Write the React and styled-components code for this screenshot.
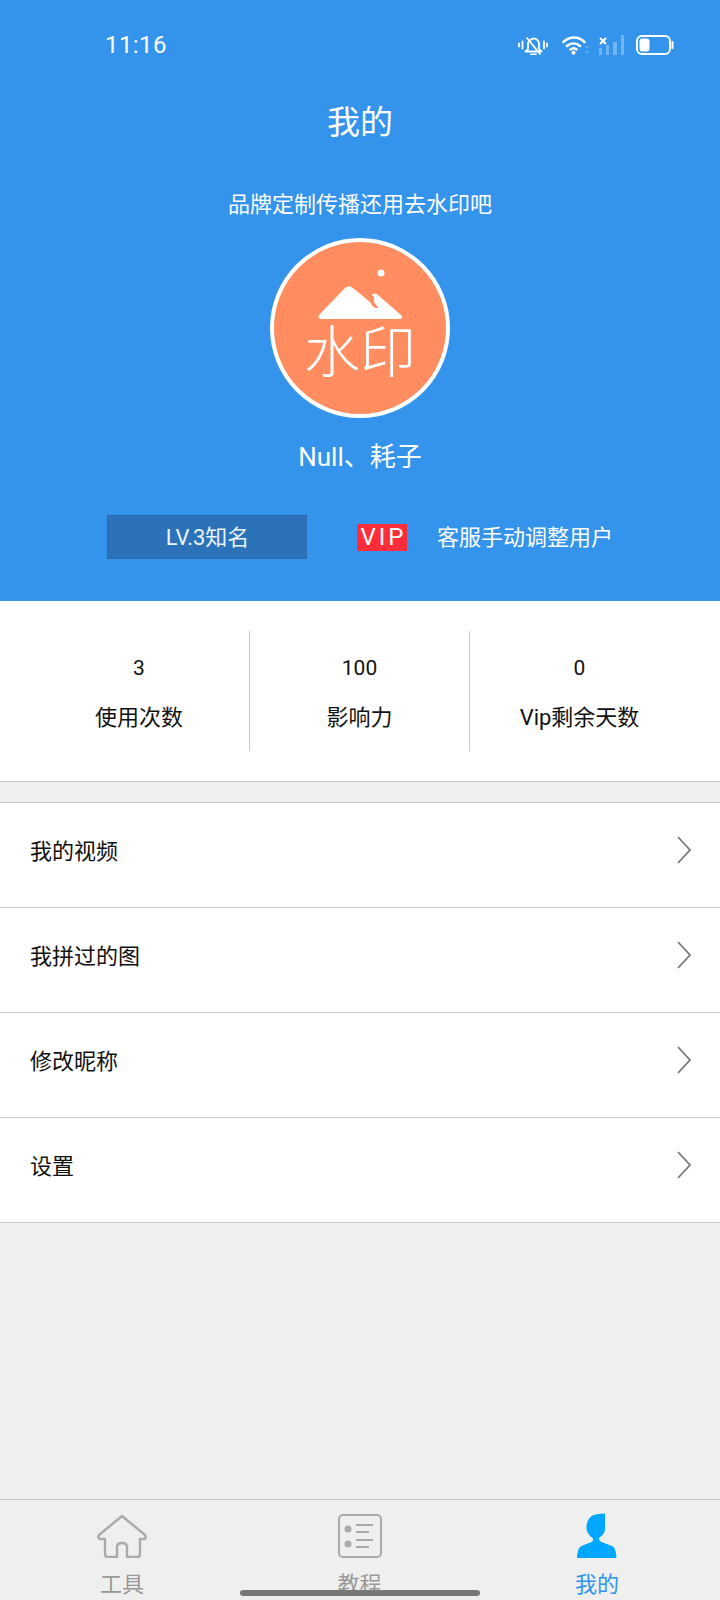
import React from 'react';
import styled, { createGlobalStyle } from 'styled-components';

const GlobalStyle = createGlobalStyle`
    html, body {
        margin: 0;
        padding: 0;
        background: #efefef;
    }
    body {
        font-family: Roboto, "Noto Sans CJK SC", sans-serif;
    }
`;

const Page = styled.div`
    position: relative;
    width: 720px;
    height: 1600px;
    display: flex;
    flex-direction: column;
    overflow: hidden;
    background: #efefef;
`;

const Header = styled.header`
    height: 601px;
    box-sizing: border-box;
    background: #3494ec;
    color: #fff;
    display: flex;
    flex-direction: column;
    align-items: center;
`;

const StatusBar = styled.div`
    align-self: stretch;
    height: 92px;
    box-sizing: border-box;
    padding: 30px 46px 0 105px;
    display: flex;
    align-items: flex-start;
    justify-content: space-between;
`;

const Clock = styled.span`
    font-size: 24px;
    line-height: 30px;
    letter-spacing: 0.4px;
`;

const StatusIcons = styled.div`
    display: flex;
    align-items: center;
    gap: 8px;
    height: 30px;
`;

const Title = styled.h1`
    margin: 0;
    height: 62px;
    font-size: 33px;
    font-weight: 400;
    line-height: 62px;
`;

const Slogan = styled.p`
    margin: 34px 0 0;
    height: 34px;
    font-size: 22px;
    line-height: 34px;
`;

const Avatar = styled.div`
    margin-top: 16px;
    width: 180px;
    height: 180px;
    box-sizing: border-box;
    border: 4px solid #fff;
    border-radius: 50%;
    background: #ff8d60;
    display: flex;
    flex-direction: column;
    align-items: center;
`;

const LogoMark = styled.svg`
    margin-top: 26px;
    display: block;
    flex: none;
`;

const LogoText = styled.span`
    margin-top: 3px;
    font-size: 56px;
    line-height: 62px;
    font-weight: 300;
    color: #fff;
`;

const UserName = styled.div`
    margin-top: 19px;
    height: 40px;
    font-size: 26px;
    line-height: 40px;
`;

const BadgeRow = styled.div`
    margin-top: 38px;
    align-self: stretch;
    padding-left: 107px;
    display: flex;
    align-items: center;
`;

const LevelBox = styled.div`
    width: 200px;
    height: 44px;
    box-sizing: border-box;
    padding-left: 1px;
    border: 1px solid #2a69ad;
    background: #2b72b9;
    font-size: 22px;
    line-height: 44px;
    text-align: center;
    color: #eaf4fd;
`;

const VipTag = styled.span`
    margin-left: 50px;
    width: 50px;
    height: 27px;
    box-sizing: border-box;
    padding-left: 3px;
    background: #ff2d3a;
    font-size: 24px;
    line-height: 27px;
    letter-spacing: 3px;
    text-align: center;
`;

const VipNote = styled.span`
    margin: 2px 0 0 30px;
    font-size: 22px;
    line-height: 30px;
`;

const Stats = styled.section`
    height: 181px;
    box-sizing: border-box;
    padding: 30px 0 0 29px;
    background: #fff;
    border-bottom: 1px solid #c8c8c8;
    display: grid;
    grid-template-columns: repeat(3, 220px);
    align-items: start;
`;

const StatCell = styled.div`
    height: 120px;
    box-sizing: border-box;
    padding-top: 20px;
    text-align: center;
    color: #111;
    border-left: ${({ $divided }) => ($divided ? '1px solid #c8c8c8' : 'none')};
`;

const StatValue = styled.div`
    font-size: 21px;
    line-height: 34px;
`;

const StatLabel = styled.div`
    margin-top: 16px;
    font-size: 22px;
    line-height: 34px;
`;

const Menu = styled.ul`
    margin: 20px 0 0;
    padding: 0;
    list-style: none;
    background: #fff;
    border-top: 1px solid #c8c8c8;
`;

const MenuItem = styled.li`
    height: 105px;
    box-sizing: border-box;
    padding: 0 29px 10px 30px;
    border-bottom: 1px solid #c8c8c8;
    display: flex;
    align-items: center;
    justify-content: space-between;
    font-size: 22px;
    color: #111;
`;

const MenuLabel = styled.span`
    margin-bottom: 2px;
`;

const TabBar = styled.nav`
    margin-top: auto;
    height: 101px;
    box-sizing: border-box;
    padding: 13px 0 0 3px;
    border-top: 1px solid #c8c8c8;
    display: grid;
    grid-template-columns: 238px 237px 238px;
`;

const Tab = styled.div`
    display: flex;
    flex-direction: column;
    align-items: center;
    color: ${({ $active }) => ($active ? '#2f96ea' : '#999')};
`;

const TabIconSlot = styled.div`
    height: 46px;
    display: flex;
    align-items: center;
`;

const TabLabel = styled.span`
    margin-top: 11px;
    font-size: 22px;
    line-height: 30px;
`;

const HomeBar = styled.div`
    position: absolute;
    left: 240px;
    bottom: 4px;
    width: 240px;
    height: 6px;
    border-radius: 3px;
    background: #777;
`;

const BellIcon = () => (
    <svg width="36" height="20" viewBox="0 0 36 20" fill="none" stroke="#fff" strokeWidth="1.800" strokeLinecap="round" strokeLinejoin="round">
        <path d="M1 8.500v3M4.500 6.500v7M26 6.500v7M29 8.500v3" />
        <path d="M7.500 16.500h16L21 14V9c0-3-2.300-5.500-5-5.500S10 6 10 9v5z" />
        <path d="M9 3l13 16M13 19.500h5" />
    </svg>
);

const WifiIcon = () => (
    <svg width="28" height="20" viewBox="0 0 28 20" fill="none">
        <path d="M1.500 7C7.500 1 16.500 1 22.500 7M5 11c4-3.500 9-3.500 13 0M8.500 14.500c2-1.500 4.500-1.500 6 0" stroke="#fff" strokeWidth="2.500" strokeLinecap="round" />
        <circle cx="11.500" cy="17.800" r="2" fill="#fff" />
        <path d="M23.500 13l1.500-1.500 1.500 1.500M23.500 16l1.500 1.500 1.500-1.500" stroke="#fff" strokeOpacity=".4" strokeWidth="1" />
    </svg>
);

const SignalIcon = () => (
    <svg width="30" height="20" viewBox="0 0 30 20" fill="none">
        <path d="M2 3l6 6M8 3L2 9" stroke="#fff" strokeWidth="2" />
        <path d="M1 13h3v7H1zM8 10h3v10H8zM15 7h4v13h-4zM23 0h3v20h-3z" fill="#fff" fillOpacity=".3" />
    </svg>
);

const BatteryIcon = () => (
    <svg width="38" height="20" viewBox="0 0 38 20" fill="none">
        <rect x="1" y="1" width="33" height="18" rx="5" stroke="#fff" strokeWidth="2" />
        <rect x="3.500" y="3.500" width="10" height="13" rx="3" fill="#fff" />
        <path d="M36.500 7v6" stroke="#fff" strokeWidth="2" strokeLinecap="round" />
    </svg>
);

const Mountain = () => (
    <LogoMark width="85" height="51" viewBox="0 0 85 51" fill="#fff">
        <circle cx="63" cy="5" r="3.500" />
        <path d="M27 20Q31 16.500 35 20L52 34C54 38 57 40.500 59.500 40C60.500 39.800 60 38.500 59 38C56.500 36 55.500 33 56 30C56.300 28.500 54 28 54 27C55 25 58 25 60 27L83 47C85 49 84 51 82 51H3C0 51 0 48 2 46Z" />
    </LogoMark>
);

const Chevron = () => (
    <svg width="14" height="28" viewBox="0 0 14 28" fill="none" stroke="#777" strokeWidth="1.800">
        <path d="M1 1l12 13L1 27" />
    </svg>
);

const HomeIcon = () => (
    <svg width="50" height="44" viewBox="0 0 50 44" fill="none" stroke="#aaa" strokeWidth="2.400" strokeLinejoin="round">
        <path d="M25 2L2 21Q0 24 3 25H8V40Q8 43 11 43H20V33Q20 29 25 29Q30 29 30 33V43H40Q43 43 43 40V25H47Q50 24 48 21Z" />
    </svg>
);

const ListIcon = () => (
    <svg width="44" height="44" viewBox="0 0 44 44" fill="none" stroke="#aaa">
        <rect x="1" y="1" width="42" height="42" rx="4" strokeWidth="2" />
        <circle cx="10" cy="15" r="3.500" fill="#aaa" stroke="none" />
        <circle cx="10" cy="30" r="3.500" fill="#aaa" stroke="none" />
        <path d="M18 11h17M18 18h13M18 26h17M18 33h13" strokeWidth="2" />
    </svg>
);

const PersonIcon = () => (
    <svg width="40" height="46" viewBox="0 0 40 46" fill="#00a7ff">
        <path d="M28 .5C28.300 5 28 10 28 14C28.500 17 27.500 20 25 22.500C23 24 22 24.500 22 25.500C22 27 23 28 24.500 29L35 33C38 34.500 39 38 39.500 45H0C.5 38 1.500 34.500 4.500 33L14.500 29C16 28 16.500 27 16 25.500C13.500 23.500 11.500 21.500 10.500 19C9.500 17 9.500 16 9.500 14C9.500 10 11 6 14 3.500C17 1.200 22 .5 28 .5Z" />
    </svg>
);

const stats = [
    { value: '3', label: '使用次数' },
    { value: '100', label: '影响力' },
    { value: '0', label: 'Vip剩余天数' },
];

const menuItems = ['我的视频', '我拼过的图', '修改昵称', '设置'];

const tabs = [
    { label: '工具', icon: <HomeIcon /> },
    { label: '教程', icon: <ListIcon /> },
    { label: '我的', icon: <PersonIcon />, active: true },
];

export default function App() {
    return (
        <Page>
            <GlobalStyle />
            <Header>
                <StatusBar>
                    <Clock>11:16</Clock>
                    <StatusIcons>
                        <BellIcon />
                        <WifiIcon />
                        <SignalIcon />
                        <BatteryIcon />
                    </StatusIcons>
                </StatusBar>
                <Title>我的</Title>
                <Slogan>品牌定制传播还用去水印吧</Slogan>
                <Avatar>
                    <Mountain />
                    <LogoText>水印</LogoText>
                </Avatar>
                <UserName>Null、耗子</UserName>
                <BadgeRow>
                    <LevelBox>LV.3知名</LevelBox>
                    <VipTag>VIP</VipTag>
                    <VipNote>客服手动调整用户</VipNote>
                </BadgeRow>
            </Header>
            <Stats>
                {stats.map((s, i) => (
                    <StatCell key={s.label} $divided={i > 0}>
                        <StatValue>{s.value}</StatValue>
                        <StatLabel>{s.label}</StatLabel>
                    </StatCell>
                ))}
            </Stats>
            <Menu>
                {menuItems.map(name => (
                    <MenuItem key={name}>
                        <MenuLabel>{name}</MenuLabel>
                        <Chevron />
                    </MenuItem>
                ))}
            </Menu>
            <TabBar>
                {tabs.map(t => (
                    <Tab key={t.label} $active={t.active}>
                        <TabIconSlot>{t.icon}</TabIconSlot>
                        <TabLabel>{t.label}</TabLabel>
                    </Tab>
                ))}
            </TabBar>
            <HomeBar />
        </Page>
    );
}
